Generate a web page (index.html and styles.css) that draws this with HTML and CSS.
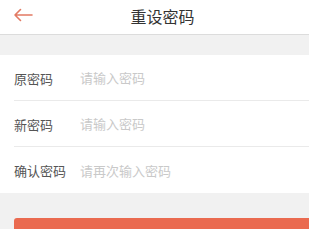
FILE: index.html
```html
<!DOCTYPE html>
<html lang="zh-CN">
<head>
  <meta charset="UTF-8" />
  <meta name="viewport" content="width=device-width, initial-scale=1.0"/>
  <title>重设密码</title>
  <link rel="stylesheet" href="styles.css">
</head>
<body>
  <div class="page">
    <header class="top-bar">
      <a class="back-btn" href="#">
        <svg width="20" height="14" viewBox="0 0 20 14">
          <path d="M19 7 H2 M7.5 1.5 L2 7 L7.5 12.5" fill="none" stroke="#e27a63" stroke-width="1.6" stroke-linecap="round" stroke-linejoin="round"/>
        </svg>
      </a>
      <h1 class="page-title">重设密码</h1>
    </header>

    <div class="gap-band"></div>

    <form class="pwd-form">
      <div class="form-row">
        <label>原密码</label>
        <input type="password" placeholder="请输入密码" />
      </div>
      <div class="form-row">
        <label>新密码</label>
        <input type="password" placeholder="请输入密码" />
      </div>
      <div class="form-row">
        <label>确认密码</label>
        <input type="password" placeholder="请再次输入密码" />
      </div>
    </form>

    <div class="actions">
      <button class="submit-btn" type="button">确定</button>
    </div>
  </div>
</body>
</html>
```

FILE: styles.css
```css
* {
  margin: 0;
  padding: 0;
  box-sizing: border-box;
}

body {
  font-family: "Noto Sans CJK SC", "Noto Sans", sans-serif;
  background-color: #f1f1f1;
  overflow: hidden;
}

.page {
  width: 325px;
}

.top-bar {
  position: relative;
  height: 35px;
  background-color: #fff;
  border-bottom: 1px solid #dcdcdc;
  display: flex;
  align-items: center;
  justify-content: center;
}

.back-btn {
  position: absolute;
  left: 13px;
  top: 8px;
  display: flex;
}

.page-title {
  font-size: 16px;
  font-weight: normal;
  color: #333;
  line-height: 1;
  margin-top: -3px;
}

.gap-band {
  height: 20px;
}

.pwd-form {
  background-color: #fff;
  padding-left: 14px;
}

.form-row {
  height: 46px;
  display: flex;
  align-items: center;
  border-bottom: 1px solid #eaeaea;
}

.form-row:last-child {
  border-bottom: none;
}

.form-row label {
  width: 66px;
  font-size: 13px;
  color: #555;
  margin-top: 1px;
}

.form-row input {
  flex: 1;
  border: none;
  outline: none;
  font-family: inherit;
  font-size: 13px;
  color: #333;
  background: transparent;
}

.form-row input::placeholder {
  color: #c9c9c9;
}

.actions {
  padding: 25px 14px 0;
}

.submit-btn {
  width: 100%;
  height: 44px;
  border: none;
  border-radius: 3px;
  background-color: #ea6a50;
  color: #fff;
  font-family: inherit;
  font-size: 16px;
}
```
